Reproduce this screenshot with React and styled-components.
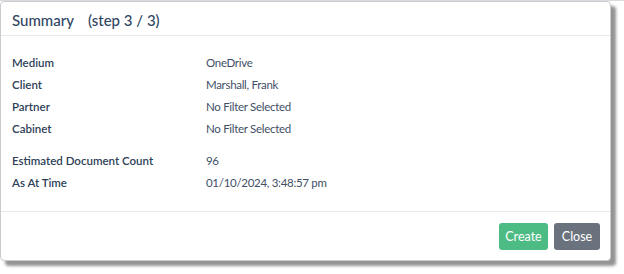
import React from 'react';
import styled, { createGlobalStyle } from 'styled-components';

const GlobalStyle = createGlobalStyle`
    html, body {
        margin: 0;
        padding: 0;
        background: #ffffff;
    }
    body {
        font-family: Lato, "Open Sans", "Liberation Sans", sans-serif;
    }
`;

const Page = styled.div`
    width: 624px;
    height: 274px;
    padding-top: 1px;
    box-sizing: border-box;
    background: linear-gradient(#d9dbde, #d9dbde) top left / 100% 1px no-repeat, #fff;
`;

const Modal = styled.div`
    width: 611px;
    height: 260px;
    box-sizing: border-box;
    background: #fff;
    border: 1px solid #c9cbce;
    border-radius: 4px;
    box-shadow: 5px 5px 3px rgba(60, 60, 60, 0.55);
    display: flex;
    flex-direction: column;
`;

const Header = styled.div`
    height: 34px;
    box-sizing: border-box;
    border-bottom: 1px solid #e6e8ea;
    padding: 3px 11px 0;
    display: flex;
    align-items: center;
    gap: 14px;
    color: #2f4563;
    font-size: 15px;
    font-weight: 500;
`;

const Body = styled.div`
    flex: 1;
    padding: 15px 11px 0;
    color: #34465f;
    font-size: 11.5px;
`;

const Group = styled.div`
    margin-bottom: ${props => props.gap || 0}px;
`;

const Row = styled.div`
    display: grid;
    grid-template-columns: 194px 1fr;
    height: 22px;
    align-items: center;
`;

const Label = styled.span`
    font-weight: 600;
    color: #2e3f57;
`;

const Value = styled.span`
    color: #3f4f66;
    letter-spacing: -0.3px;
`;

const Footer = styled.div`
    height: 49px;
    box-sizing: border-box;
    border-top: 1px solid #e6e8ea;
    display: flex;
    align-items: center;
    justify-content: flex-end;
    gap: 6px;
    padding: 0 10px;
`;

const Button = styled.button`
    height: 27px;
    width: ${props => props.w}px;
    padding: 0;
    border: none;
    border-radius: 3px;
    background: ${props => props.bg};
    color: #fff;
    font-family: inherit;
    font-size: 12.5px;
    cursor: pointer;
`;

const summary = [
    [
        ['Medium', 'OneDrive'],
        ['Client', 'Marshall, Frank'],
        ['Partner', 'No Filter Selected'],
        ['Cabinet', 'No Filter Selected'],
    ],
    [
        ['Estimated Document Count', '96'],
        ['As At Time', '01/10/2024, 3:48:57 pm'],
    ],
];

export default function App() {
    return (
        <Page>
            <GlobalStyle />
            <Modal>
                <Header>
                    <span>Summary</span>
                    <span>(step 3 / 3)</span>
                </Header>
                <Body>
                    {summary.map((group, i) => (
                        <Group key={i} gap={i === 0 ? 10 : 0}>
                            {group.map(([label, value]) => (
                                <Row key={label}>
                                    <Label>{label}</Label>
                                    <Value>{value}</Value>
                                </Row>
                            ))}
                        </Group>
                    ))}
                </Body>
                <Footer>
                    <Button bg="#4dbb84" w={49}>Create</Button>
                    <Button bg="#6a737d" w={46}>Close</Button>
                </Footer>
            </Modal>
        </Page>
    );
}
